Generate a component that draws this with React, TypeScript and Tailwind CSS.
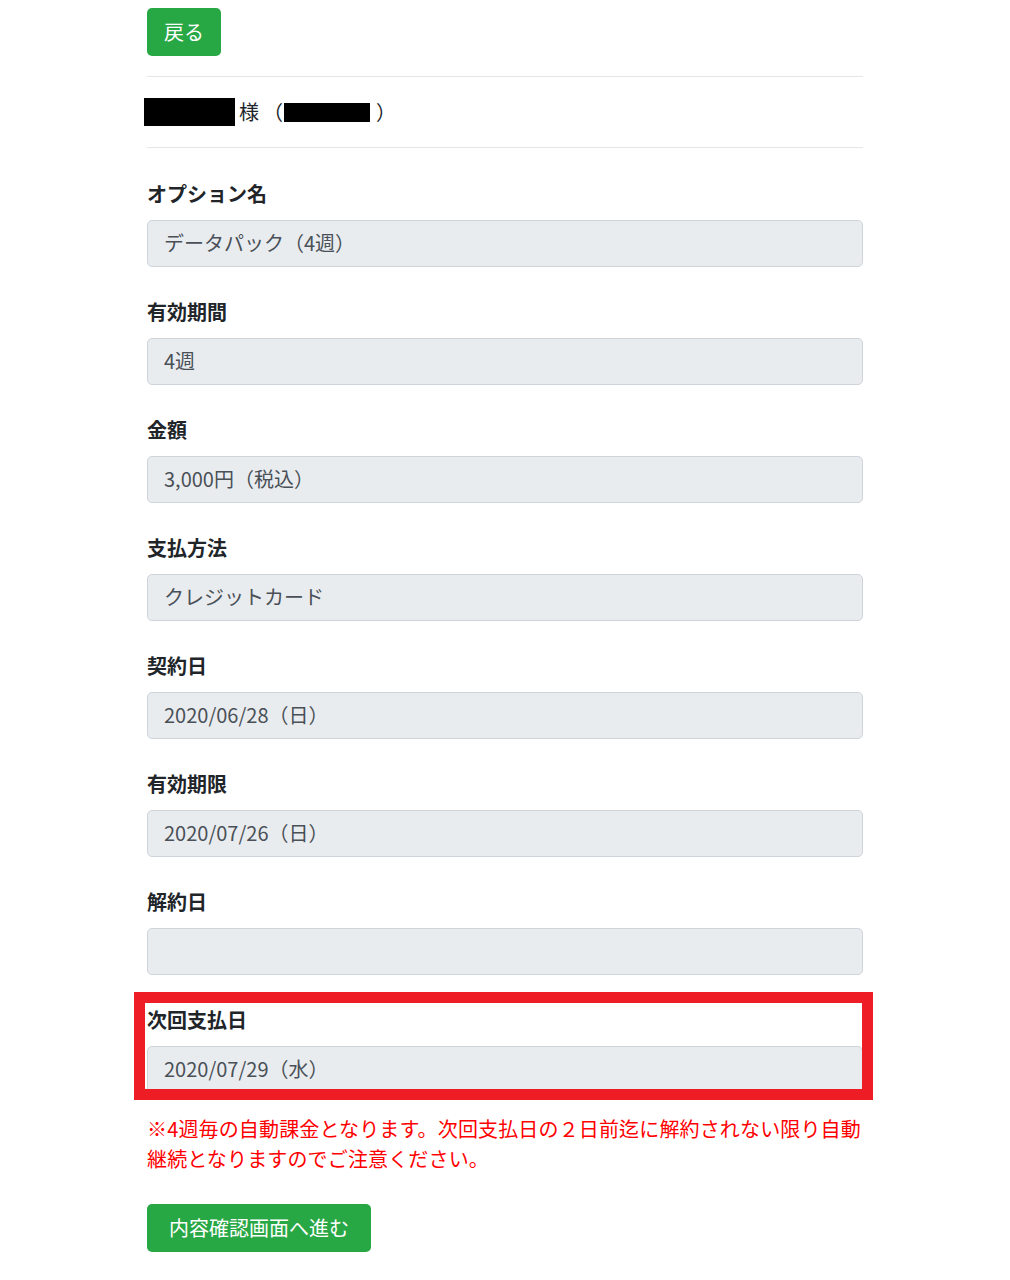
import React from 'react';

interface Field {
  label: string;
  value: string;
}

const fields: Field[] = [
  { label: 'オプション名', value: 'データパック（4週）' },
  { label: '有効期間', value: '4週' },
  { label: '金額', value: '3,000円（税込）' },
  { label: '支払方法', value: 'クレジットカード' },
  { label: '契約日', value: '2020/06/28（日）' },
  { label: '有効期限', value: '2020/07/26（日）' },
  { label: '解約日', value: '' },
];

const font = { fontFamily: '"Noto Sans CJK JP", "Noto Sans", sans-serif' };

function FormField({ label, value }: Field) {
  return (
    <div>
      <label className="block h-[28px] leading-[28px] text-[20px] font-bold text-[#212529] mb-[12px]">{label}</label>
      <input
        type="text"
        value={value}
        readOnly
        className="block w-full h-[47px] px-[16px] pb-[3px] text-[20px] text-[#495057] bg-[#e9ecef] border border-[#ced4da] rounded-[5px] outline-none"
      />
    </div>
  );
}

export default function App() {
  return (
    <div className="min-h-screen bg-white" style={font}>
      <div className="mx-auto w-[716px] pt-[8px] pb-[20px]">
        <button
          type="button"
          className="h-[48px] px-[17px] text-[20px] text-white bg-[#28a745] rounded-[5px]"
        >
          戻る
        </button>
        <hr className="mt-[20px] border-0 border-t border-[#e6e6e6]" />
        <div className="h-[70px] flex items-center text-[20px] text-[#212529]">
          <span className="inline-block w-[91px] h-[28px] bg-black -ml-[3px] mr-[4px]"></span>
          <span>様</span>
          <span className="ml-[4px]">（</span>
          <span className="inline-block w-[86px] h-[19px] bg-black ml-[1px] mr-[6px]"></span>
          <span>）</span>
        </div>
        <hr className="border-0 border-t border-[#e6e6e6]" />

        <div className="mt-[32px] flex flex-col gap-[31px]">
          {fields.map((f) => (
            <FormField key={f.label} label={f.label} value={f.value} />
          ))}
          <div className="relative">
            <FormField label="次回支払日" value="2020/07/29（水）" />
            <div className="absolute -top-[14px] -left-[13px] -right-[10px] -bottom-[7px] border-[11px] border-[#ee1c25] pointer-events-none"></div>
          </div>
        </div>

        <p className="mt-[21px] text-[20px] leading-[30px] tracking-[0.15px] text-[#ff0000]">
          ※4週毎の自動課金となります。次回支払日の２日前迄に解約されない限り自動継続となりますのでご注意ください。
        </p>

        <button
          type="button"
          className="mt-[30px] h-[48px] px-[22px] text-[20px] text-white bg-[#28a745] rounded-[5px]"
        >
          内容確認画面へ進む
        </button>
      </div>
    </div>
  );
}
